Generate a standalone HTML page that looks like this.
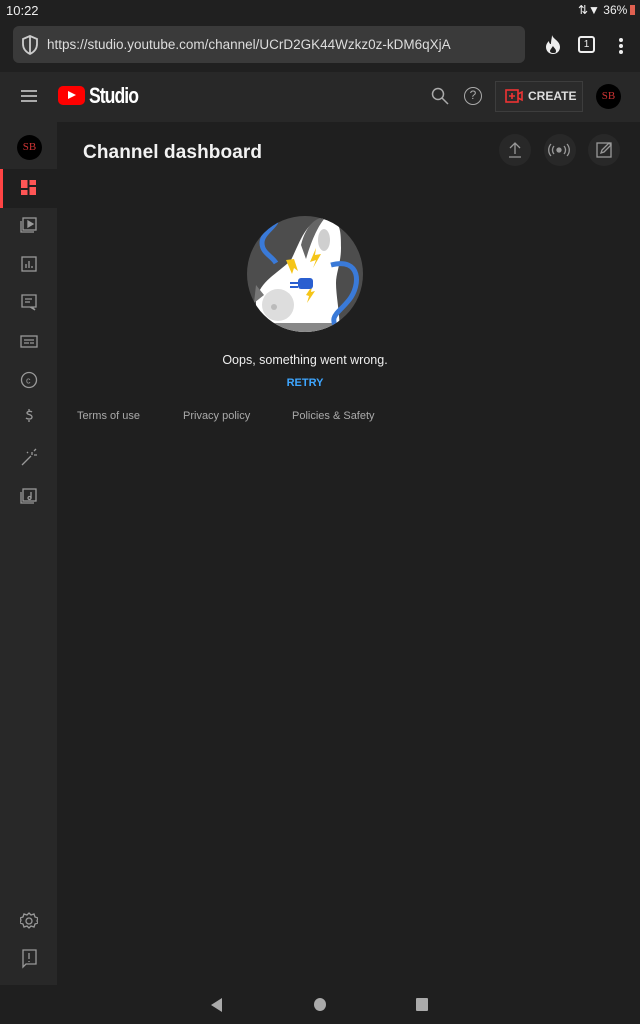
<!DOCTYPE html>
<html><head><meta charset="utf-8"><style>
*{margin:0;padding:0;box-sizing:border-box}
body{width:640px;height:1024px;background:#1f1f1f;font-family:"Liberation Sans",sans-serif;position:relative;overflow:hidden;color:#fff}
.abs{position:absolute}
</style></head><body>
<div class="abs" style="left:0;top:0;width:640px;height:72px;background:#202020"></div>
<div class="abs" style="left:6px;top:3px;font-size:13px;color:#eee">10:22</div>
<div class="abs" style="left:578px;top:3px;font-size:12px;color:#eee">⇅▼ 36%<span style="display:inline-block;width:5px;height:10px;background:#e06050;margin-left:3px;vertical-align:-1px"></span></div>
<div class="abs" style="left:13px;top:26px;width:512px;height:37px;background:#3a3a3a;border-radius:6px"></div>
<svg class="abs" style="left:21px;top:35px" width="18" height="20" viewBox="0 0 18 20"><path d="M9 1L2 4v5c0 5 3 8 7 10 4-2 7-5 7-10V4z" fill="none" stroke="#ccc" stroke-width="1.8"/><path d="M9 1v18" stroke="#ccc" stroke-width="1.8"/></svg>
<div class="abs" style="left:47px;top:37px;font-size:13.5px;color:#ddd">https://studio.youtube.com/channel/UCrD2GK44Wzkz0z-kDM6qXjA</div>
<svg class="abs" style="left:545px;top:35px" width="16" height="19" viewBox="0 0 16 19"><path d="M7 0c1 4 8 6 8 12 0 4-3 7-7 7s-7-3-7-7c0-3 2-5 3-6 0 2 1 3 2 3 0-4 1-6 1-9z" fill="#eee"/><path d="M8 11c1 2 3 3 3 5s-1 2-3 2-3-1-3-2 1-2 3-5z" fill="#202020"/></svg>
<div class="abs" style="left:578px;top:36px;width:17px;height:17px;border:2px solid #eee;border-radius:3px;font-size:10px;text-align:center;line-height:13px;color:#eee">1</div>
<div class="abs" style="left:619px;top:38px;width:4px;height:4px;background:#eee;border-radius:2px;box-shadow:0 6px #eee,0 12px #eee"></div>

<div class="abs" style="left:0;top:72px;width:640px;height:50px;background:#282828"></div>
<div class="abs" style="left:21px;top:90px;width:16px;height:1.5px;background:#aaa;box-shadow:0 5px #aaa,0 10px #aaa"></div>
<div class="abs" style="left:58px;top:86px;width:27px;height:19px;background:#f00;border-radius:5px"></div>
<div class="abs" style="left:68px;top:91px;width:0;height:0;border-left:8px solid #fff;border-top:4.5px solid transparent;border-bottom:4.5px solid transparent"></div>
<div class="abs" style="left:89px;top:83px;font-size:22px;font-weight:bold;letter-spacing:-1.2px;transform:scaleX(.8);transform-origin:left">Studio</div>
<svg class="abs" style="left:431px;top:87px" width="18" height="18"><circle cx="7" cy="7" r="5.5" fill="none" stroke="#aaa" stroke-width="1.5"/><path d="M11 11l6 6" stroke="#aaa" stroke-width="1.5"/></svg>
<div class="abs" style="left:464px;top:87px;width:18px;height:18px;border:1.5px solid #aaa;border-radius:50%;font-size:12px;text-align:center;line-height:15px;color:#aaa">?</div>
<div class="abs" style="left:495px;top:81px;width:88px;height:31px;border:1px solid #3d3d3d;background:#2b2b2b"></div>
<svg class="abs" style="left:505px;top:89px" width="18" height="14"><rect x="1" y="1" width="12" height="12" fill="none" stroke="#e33" stroke-width="1.6"/><path d="M13 5l4-2v8l-4-2M7 4v6M4 7h6" stroke="#e33" stroke-width="1.6" fill="none"/></svg>
<div class="abs" style="left:528px;top:89px;font-size:12px;font-weight:bold;color:#ddd">CREATE</div>
<div class="abs" style="left:596px;top:84px;width:25px;height:25px;background:#000;border-radius:50%;color:#c33;font-size:11px;text-align:center;line-height:25px;font-family:'Liberation Serif',serif">SB</div>

<div class="abs" style="left:0;top:122px;width:57px;height:863px;background:#282828"></div>
<div class="abs" style="left:17px;top:135px;width:25px;height:25px;background:#000;border-radius:50%;color:#c33;font-size:11px;text-align:center;line-height:25px;font-family:'Liberation Serif',serif">SB</div>
<div class="abs" style="left:0;top:169px;width:57px;height:39px;background:#1f1f1f"></div>
<div class="abs" style="left:0;top:169px;width:3px;height:39px;background:#f44"></div>
<svg class="abs" style="left:21px;top:180px" width="15" height="15"><rect x="0" y="0" width="6.5" height="8" fill="#f55"/><rect x="8.5" y="0" width="6.5" height="5" fill="#f55"/><rect x="0" y="10" width="6.5" height="5" fill="#f55"/><rect x="8.5" y="7" width="6.5" height="8" fill="#f55"/></svg>
<svg class="abs" style="left:20px;top:217px" width="18" height="300" fill="none" stroke="#999" stroke-width="1.3">
<rect x="3" y="1" width="13" height="12"/><path d="M1 4v11h13"/><path d="M8 4l5 3-5 3z" fill="#999"/>
<rect x="2" y="40" width="14" height="14"/><path d="M6 51v-4M9 51v-7M12 51v-2"/>
<path d="M2 78h14v12H12l3 3-5-3H2z"/><path d="M5 82h7M5 85h5"/>
<rect x="1" y="119" width="16" height="11"/><path d="M4 123h10M4 126h5M10 126h4"/>
<circle cx="9" cy="163" r="7.5"/><text x="6" y="166.5" font-size="9" fill="#999" stroke="none" font-family="Liberation Sans">c</text>
<path d="M12 195c-1-1-5-1-5 1s5 1 5 4-5 2-6 1M9 192v2M9 203v2"/>
<path d="M2 248l9-9M12 235v3M14 238h3M14 234l2-2M7 235l1 1"/>
<rect x="3" y="272" width="13" height="12"/><path d="M1 275v11h13M11 275v6"/><circle cx="9.5" cy="281" r="1.5"/>
</svg>
<svg class="abs" style="left:20px;top:912px" width="18" height="60" fill="none" stroke="#999" stroke-width="1.3">
<circle cx="9" cy="9" r="3"/><path d="M9 1l2 2 3-1 1 3 3 1-1 3 1 2-3 1-1 3-3-1-2 2-2-2-3 1-1-3-3-1 1-3-1-2 3-1 1-3 3 1z"/>
<path d="M3 38h13v14H6l-3 3z"/><path d="M9 41v6M9 49v1"/>
</svg>

<div class="abs" style="left:83px;top:142px;font-size:19px;font-weight:bold;color:#f2f2f2;letter-spacing:0.1px">Channel dashboard</div>
<div class="abs" style="left:499px;top:134px;width:32px;height:32px;background:#282828;border-radius:50%"></div>
<div class="abs" style="left:544px;top:134px;width:32px;height:32px;background:#282828;border-radius:50%"></div>
<div class="abs" style="left:588px;top:134px;width:32px;height:32px;background:#282828;border-radius:50%"></div>
<svg class="abs" style="left:499px;top:134px" width="122" height="32" fill="none" stroke="#999" stroke-width="1.3">
<path d="M16 9v11M11 14l5-5 5 5M10 23h12"/>
<circle cx="60" cy="16" r="2" fill="#999"/><path d="M55 12a6 6 0 0 0 0 8M65 12a6 6 0 0 1 0 8M52 10a9 9 0 0 0 0 12M68 10a9 9 0 0 1 0 12"/>
<rect x="98" y="9" width="14" height="14"/><path d="M102 19l1-3 7-7 2 2-7 7z"/>
</svg>

<svg class="abs" style="left:246px;top:215px" width="118" height="118" viewBox="0 0 118 118">
<defs><clipPath id="c"><circle cx="59" cy="59" r="58"/></clipPath></defs>
<circle cx="59" cy="59" r="58" fill="#4d4d4d"/>
<g clip-path="url(#c)">
<path d="M10 118V85c5-20 20-25 35-40 10-20 15-40 35-42 15 0 15 15 15 30 0 15-5 25-5 35 0 15 5 35 3 50z" fill="#fff"/>
<path d="M55 30c5-20 15-28 25-28-8 8-15 25-20 42z" fill="#666"/>
<ellipse cx="78" cy="25" rx="6" ry="11" fill="#cfcfcf"/>
<path d="M8 108h110v10H8z" fill="#888"/>
<path d="M30 0c5 10-14 16-14 28 0 10 10 13 14 20M85 50c30-8 30 20 18 35-12 15-20 15-12 30" fill="none" stroke="#3a7ad8" stroke-width="5"/>
<path d="M40 45l8-1 4 12-4-3-2 6z M70 33l-6 14 6-2-3 8 8-14-6 1z M60 80l6-9-1 6 4-1-8 12 2-7z" fill="#f5c518"/>
<rect x="52" y="63" width="15" height="11" rx="3" fill="#2a5fd0"/>
<path d="M44 68h8M44 72h8" stroke="#2a5fd0" stroke-width="2"/>
<circle cx="32" cy="90" r="16" fill="#ddd"/>
<circle cx="28" cy="92" r="3" fill="#bbb"/>
<path d="M10 70l8 10-10 8z" fill="#777"/>
</g>
</svg>

<div class="abs" style="left:0;top:353px;width:610px;text-align:center;font-size:12.5px;color:#eee">Oops, something went wrong.</div>
<div class="abs" style="left:0;top:377px;width:610px;text-align:center;font-size:11px;font-weight:bold;color:#3ea6ff">RETRY</div>
<div class="abs" style="left:77px;top:410px;font-size:11px;color:#aaa">Terms of use</div>
<div class="abs" style="left:183px;top:410px;font-size:11px;color:#aaa">Privacy policy</div>
<div class="abs" style="left:292px;top:410px;font-size:11px;color:#aaa">Policies &amp; Safety</div>

<div class="abs" style="left:211px;top:998px;width:0;height:0;border-right:11px solid #aaa;border-top:7px solid transparent;border-bottom:7px solid transparent"></div>
<div class="abs" style="left:314px;top:998px;width:12px;height:13px;background:#aaa;border-radius:50%"></div>
<div class="abs" style="left:416px;top:998px;width:12px;height:13px;background:#aaa;border-radius:1px"></div>
</body></html>
